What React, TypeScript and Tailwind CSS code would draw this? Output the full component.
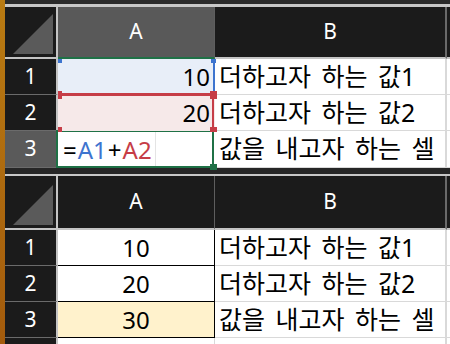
import React from "react";

const FONT = "font-['Noto_Sans','Noto_Sans_CJK_KR',sans-serif]";

function HeaderRow({ selectedA, h }: { selectedA: boolean; h: string }) {
  return (
    <div className={`flex flex-none ${h}`}>
      <div className="w-[53px] flex-none border-r-2 border-b-2 border-[#c4c4c4] bg-[#1b1b1b] flex items-end">
        <svg width="51" height="50" viewBox="0 0 51 50" className="block">
          <polygon points="8,47 48,7 48,47" fill="#5a5a5a" />
        </svg>
      </div>
      <div
        className={`w-[157px] flex-none flex items-center justify-center text-[21px] text-white border-b-2 border-r border-r-[#5e5e5e] ${
          selectedA ? "bg-[#595959] border-b-[#1f7146]" : "bg-[#1b1b1b] border-b-[#c4c4c4]"
        }`}
      >
        A
      </div>
      <div className="w-[232px] flex-none flex items-center justify-center text-[21px] text-white bg-[#1b1b1b] border-b-2 border-b-[#c4c4c4] border-r-2 border-r-[#6a6a6a]">
        B
      </div>
      <div className="flex-1 bg-[#1b1b1b] border-b-2 border-b-[#c4c4c4]" />
    </div>
  );
}

function RowHeader({ n, selected }: { n: string; selected?: boolean }) {
  return (
    <div
      className={`w-[53px] flex-none border-r-2 border-r-[#c4c4c4] border-b border-b-[#6b6b6b] text-white text-[21px] flex items-center justify-center ${
        selected ? "bg-[#5a5a5a]" : "bg-[#1b1b1b]"
      }`}
    >
      {n}
    </div>
  );
}

function BCell({ text }: { text: string }) {
  return (
    <>
      <div className="w-[232px] flex-none border-r-2 border-r-[#d9d9d9] border-b border-b-[#d9d9d9] bg-white pl-[4px] text-[25px] [word-spacing:4px] text-black flex items-center whitespace-nowrap overflow-hidden">
        {text}
      </div>
      <div className="flex-1 bg-white border-b border-b-[#d9d9d9]" />
    </>
  );
}

export default function App() {
  return (
    <div className={`w-[450px] h-[344px] overflow-hidden flex bg-[#1b1b1b] ${FONT}`}>
      <div className="w-[5px] flex-none bg-gradient-to-b from-[#b97b12] to-[#a35b0c]" />
      <div className="flex-1 flex flex-col">
        {/* Top sheet */}
        <div className="h-[4px] flex-none bg-[#2b2b2b]" />
        <div className="h-[3px] flex-none bg-[#c8c8c8]" />
        <HeaderRow selectedA h="h-[52px]" />

        <div className="flex h-[36px] flex-none">
          <RowHeader n="1" />
          <div className="relative w-[157px] flex-none bg-[#e8eef8] flex items-center justify-end pr-[5px] text-[24px] text-black">
            10
            <div className="absolute right-0 top-0 bottom-0 w-[2px] bg-[#3d74cf]" />
            <div className="absolute left-0 top-0 w-[4px] h-[4px] bg-[#3d74cf]" />
            <div className="absolute right-[-1px] top-0 w-[5px] h-[4px] bg-[#3d74cf]" />
          </div>
          <BCell text="더하고자 하는 값1" />
        </div>

        <div className="flex h-[36px] flex-none">
          <RowHeader n="2" />
          <div className="relative z-20 w-[157px] flex-none bg-[#f6e9e9] flex items-center justify-end pr-[5px] text-[24px] text-black">
            20
            <div className="absolute left-0 right-0 top-[-2px] h-[3px] bg-[#c63d47]" />
            <div className="absolute right-[1px] top-0 bottom-0 w-[2px] bg-[#c63d47]" />
            <div className="absolute left-0 top-[-4px] w-[4px] h-[8px] bg-[#c63d47]" />
            <div className="absolute right-[-2px] top-[-4px] w-[7px] h-[8px] bg-[#c63d47]" />
            <div className="absolute left-0 bottom-[-1px] w-[4px] h-[5px] bg-[#c63d47]" />
            <div className="absolute right-[-2px] bottom-[-1px] w-[7px] h-[5px] bg-[#c63d47]" />
          </div>
          <BCell text="더하고자 하는 값2" />
        </div>

        <div className="flex h-[37px] flex-none">
          <RowHeader n="3" selected />
          <div className="relative z-10 w-[157px] flex-none bg-white flex items-center pl-[5px] text-[24px] text-black whitespace-nowrap">
            <span>=</span>
            <span className="text-[#3d74cf] ml-[1px]">A1</span>
            <span className="mx-[1px]">+</span>
            <span className="text-[#c63d47]">A2</span>
            <div className="absolute left-[97px] top-0 bottom-0 w-px bg-[#e4e4e4]" />
            <div className="absolute top-[-1px] left-[-2px] right-[1px] bottom-0 border-2 border-[#1f7146]" />
            <div className="absolute right-[-2px] bottom-[-2px] w-[7px] h-[6px] bg-[#1f7146]" />
          </div>
          <BCell text="값을 내고자 하는 셀" />
        </div>

        {/* Bottom sheet */}
        <div className="h-[6px] flex-none bg-[#262626]" />
        <div className="h-[2px] flex-none bg-[#c8c8c8]" />
        <HeaderRow selectedA={false} h="h-[54px]" />

        <div className="flex h-[36px] flex-none">
          <RowHeader n="1" />
          <div className="w-[157px] flex-none bg-white border-r border-b border-black flex items-center justify-center text-[24px] text-black">
            10
          </div>
          <BCell text="더하고자 하는 값1" />
        </div>
        <div className="flex h-[36px] flex-none">
          <RowHeader n="2" />
          <div className="w-[157px] flex-none bg-white border-r border-b border-black flex items-center justify-center text-[24px] text-black">
            20
          </div>
          <BCell text="더하고자 하는 값2" />
        </div>
        <div className="flex h-[36px] flex-none">
          <RowHeader n="3" />
          <div className="w-[157px] flex-none bg-[#fff2cc] border-r border-b border-black flex items-center justify-center text-[24px] text-black">
            30
          </div>
          <BCell text="값을 내고자 하는 셀" />
        </div>
        <div className="flex flex-1">
          <div className="w-[53px] flex-none border-r-2 border-r-[#c4c4c4] bg-[#1b1b1b]" />
          <div className="w-[157px] flex-none bg-white border-r border-r-[#d9d9d9]" />
          <div className="w-[232px] flex-none bg-white border-r-2 border-r-[#d9d9d9]" />
          <div className="flex-1 bg-white" />
        </div>
      </div>
    </div>
  );
}
